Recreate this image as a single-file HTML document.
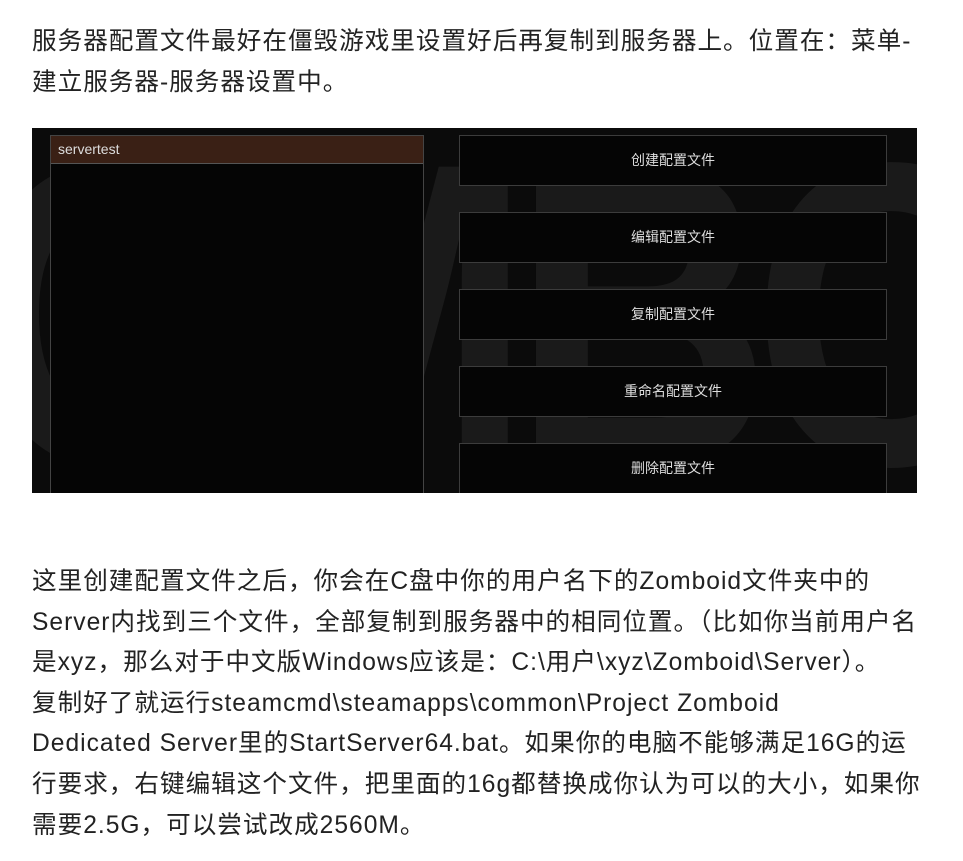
<!DOCTYPE html>
<html><head><meta charset="utf-8"><style>
body{margin:0;background:#fff;width:963px;height:861px;overflow:hidden;font-family:"Liberation Sans","Noto Sans CJK SC",sans-serif;color:#222;}
.p{position:absolute;left:32px;font-size:24.6px;line-height:40.6px;white-space:nowrap;letter-spacing:1px;}
.img{position:absolute;left:32px;top:128px;width:885px;height:365px;background:#0b0b0b;overflow:hidden;}
.bg{position:absolute;color:#1a1a1a;font-family:"Liberation Sans",sans-serif;font-weight:bold;font-size:360px;letter-spacing:-20px;left:-60px;top:-20px;transform:scaleY(1.2);}
.panel{position:absolute;left:18px;top:7px;width:372px;height:370px;border:1px solid #444;background:#050505;}
.hdr{height:27px;background:#3a2015;border-bottom:1px solid #555;color:#ddd;font-size:14px;line-height:27px;padding-left:7px;}
.btn{position:absolute;left:427px;width:426px;height:49px;border:1px solid #3c3c3c;background:#050505;color:#ddd;font-size:14px;text-align:center;line-height:49px;}
</style></head><body>
<div class="p" style="top:22px">服务器配置文件最好在僵毁游戏里设置好后再复制到服务器上。位置在：菜单-<br>建立服务器-服务器设置中。</div>
<div class="img">
<div class="bg">OMBOID</div>
<div class="panel"><div class="hdr">servertest</div></div>
<div class="btn" style="top:7px">创建配置文件</div>
<div class="btn" style="top:84px">编辑配置文件</div>
<div class="btn" style="top:161px">复制配置文件</div>
<div class="btn" style="top:238px">重命名配置文件</div>
<div class="btn" style="top:315px">删除配置文件</div>
</div>
<div class="p" style="top:562px">这里创建配置文件之后，你会在C盘中你的用户名下的Zomboid文件夹中的<br>Server内找到三个文件，全部复制到服务器中的相同位置。（比如你当前用户名<br>是xyz，那么对于中文版Windows应该是：C:\用户\xyz\Zomboid\Server）。<br>复制好了就运行steamcmd\steamapps\common\Project Zomboid<br>Dedicated Server里的StartServer64.bat。如果你的电脑不能够满足16G的运<br>行要求，右键编辑这个文件，把里面的16g都替换成你认为可以的大小，如果你<br>需要2.5G，可以尝试改成2560M。</div>
</body></html>
